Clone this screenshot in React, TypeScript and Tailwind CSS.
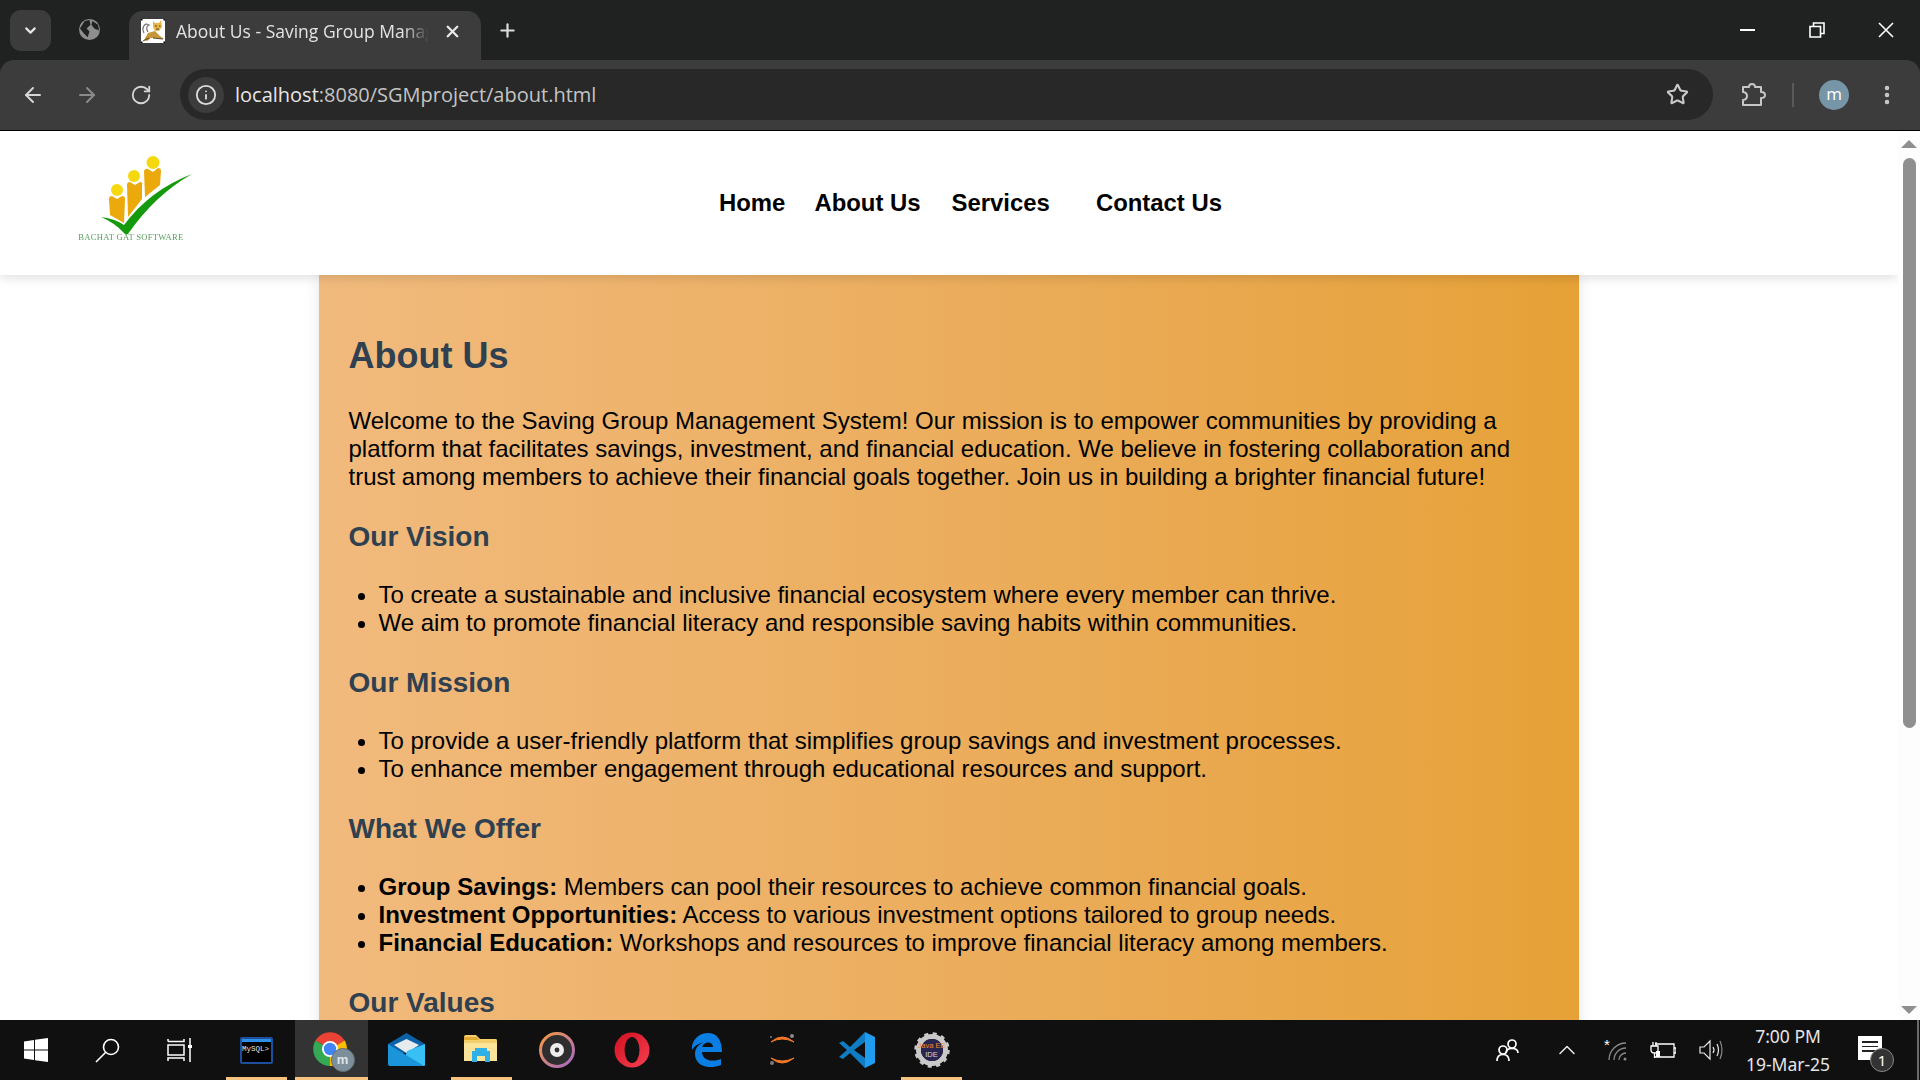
import { ArrowLeft, ArrowRight, ChevronDown, ChevronUp, Info, MoreVertical, Plus, RotateCw, Star, X } from 'lucide-react';

function TomcatIcon() {
  return (
    <svg width="24" height="24" viewBox="0 0 24 24" className="shrink-0">
      <rect width="24" height="24" fill="#fff" />
      <path d="M7 13 Q4 8 8 6 L5 5 Q0 8 3 14" fill="none" stroke="#777" strokeWidth="1.2" />
      <path d="M3 21 L7 14 L14 12 L19 17 L23 20 L16 19 L10 19 L6 22 Z" fill="#c8963a" />
      <path d="M12 2 L14 4 L18 4 L20 1 L21 8 L18 12 L14 12 L12 8 Z" fill="#e8b648" />
      <path d="M14 7 h2 M18 7 h1.5 M15 10 h3" stroke="#4a3412" strokeWidth="0.9" />
      <path d="M2 22 L8 19 M12 19 L22 20" stroke="#4a3412" strokeWidth="0.9" />
      <rect width="1.5" height="1.5" fill="#000" /><rect x="22.5" width="1.5" height="1.5" fill="#000" />
      <rect y="22.5" width="1.5" height="1.5" fill="#000" /><rect x="22.5" y="22.5" width="1.5" height="1.5" fill="#000" />
    </svg>
  );
}

function Logo() {
  return (
    <svg width="180" height="130" viewBox="0 0 180 130" className="blur-[0.3px]">
      <circle cx="67" cy="55" r="6" fill="#f6d80f" />
      <circle cx="84" cy="41" r="6" fill="#f6d80f" />
      <circle cx="103" cy="27.5" r="6.5" fill="#f6d80f" />
      <path d="M59 64 Q59 61 62 61 L67 64 L72 61 Q75 61 75 64 L74 88 L60 80 Z" fill="#eba90c" />
      <path d="M77 50 Q77 47 80 47 L85 50 L90 47 Q93 47 92 50 L92 64 L78 82 Z" fill="#eba90c" />
      <path d="M94 36 Q95 33 98 34 L103 37 L108 33 Q111 33 111 36 L110 50 L95 62 Z" fill="#eba90c" />
      <path d="M51 82 Q66 84 74 90 Q100 55 142 39 Q105 60 78 99 Q75 100 74 98 Q65 88 51 82 Z" fill="#159a0d" />
      <text x="28.3" y="105" textLength="105" fontSize="8.6" fill="#5a9e60" fontFamily="Liberation Serif, serif">BACHAT GAT SOFTWARE</text>
    </svg>
  );
}

function PuzzleIcon() {
  return (
    <svg width="26" height="26" viewBox="0 0 26 26" fill="none" stroke="#c7c7c7" strokeWidth="2">
      <path d="M3 5 H9 Q9 2 12 2 Q15 2 15 5 H21 V10 Q25 10 25 13 Q25 16 21 16 V23 H3 V18 Q7 17.5 7 14 Q7 10.5 3 10 Z" strokeLinejoin="round" />
    </svg>
  );
}

function MysqlIcon() {
  return (
    <div className="w-[33px] h-[27px] bg-black border-2 border-[#1c4f9c] rounded-[2px] flex flex-col">
      <div className="h-[3px] bg-[#2f8fe8]" />
      <span className="text-[7.5px] leading-[14px] text-[#e8e8e8] font-['Liberation_Mono',monospace] whitespace-nowrap">MySQL&gt;</span>
    </div>
  );
}

function ChromeIcon() {
  return (
    <div className="relative w-[40px] h-[38px]">
      <svg width="36" height="36" viewBox="0 0 36 36">
        <path d="M18 18 L3.4 9.6 A17 17 0 0 1 32.7 9.6 Z" fill="#ea4335" />
        <path d="M18 18 L32.7 9.6 A17 17 0 0 1 18 35 Z" fill="#fbbc04" />
        <path d="M18 18 L18 35 A17 17 0 0 1 3.4 9.6 Z" fill="#34a853" />
        <circle cx="18" cy="18" r="8" fill="#fff" />
        <circle cx="18" cy="18" r="6.2" fill="#4285f4" />
      </svg>
      <div className="absolute right-[-3px] bottom-[-3px] w-[24px] h-[24px] rounded-full bg-[#7d8f9b] border border-[#5f6c74] flex items-center justify-center text-[#dfe5e8] text-[13px] font-bold font-['Liberation_Sans',sans-serif]">m</div>
    </div>
  );
}

function MailIcon() {
  return (
    <svg width="38" height="34" viewBox="0 0 38 34">
      <path d="M0 11 L18.5 0 L37 11 V20 H0 Z" fill="#0b62a8" />
      <path d="M6 12 L18.5 6 L31 12 L18.5 20 Z" fill="#e6ebee" />
      <path d="M37 11 V32 Q37 33 36 33 H14 L19 18 Z" fill="#38c0f5" />
      <path d="M0 11 L36 33 H2 Q0 33 0 31 Z" fill="#1b95da" />
    </svg>
  );
}

function ExplorerIcon() {
  return (
    <svg width="36" height="30" viewBox="0 0 36 30">
      <path d="M0 2 Q0 0 2 0 H12 L16 4 H32 Q33 4 33 6 V26 H0 Z" fill="#f5cf6b" />
      <path d="M0 2 H13 L15 5 H0 Z" fill="#e2ab36" />
      <path d="M0 8 H33 V26 H0 Z" fill="#fbe39a" />
      <path d="M8 16 H26 V27 H21 V21 H13 V27 H8 Z" fill="#2fb1e8" />
      <path d="M11 13 H23 V16 H11 Z" fill="#2fb1e8" />
    </svg>
  );
}

function GrooveIcon() {
  return (
    <svg width="38" height="38" viewBox="0 0 38 38">
      <defs>
        <linearGradient id="groove" x1="0" y1="0" x2="1" y2="1">
          <stop offset="0" stopColor="#f59a43" />
          <stop offset="1" stopColor="#a368c8" />
        </linearGradient>
      </defs>
      <circle cx="19" cy="19" r="16.5" fill="#2e2e2e" stroke="url(#groove)" strokeWidth="3" />
      <circle cx="19" cy="19" r="7" fill="#eee" />
      <circle cx="19" cy="19" r="2.4" fill="#333" />
    </svg>
  );
}

function OperaIcon() {
  return (
    <svg width="36" height="36" viewBox="0 0 36 36">
      <defs>
        <linearGradient id="opera" x1="0" y1="0" x2="1" y2="1">
          <stop offset="0" stopColor="#d01020" />
          <stop offset="1" stopColor="#f84050" />
        </linearGradient>
      </defs>
      <ellipse cx="18" cy="18" rx="17.5" ry="17.5" fill="url(#opera)" />
      <ellipse cx="18" cy="18" rx="7.5" ry="13" fill="#111" />
    </svg>
  );
}

function EdgeIcon() {
  return (
    <svg width="32" height="34" viewBox="0 0 32 34">
      <path d="M1 13 C3 4 10 0 17 0 C26 0 31 7 31 19 H11 C11 26 19 30 30 26 V32 C18 37 4 33 4 21 C4 15 8 11 13 9 C9 10 4 12 1 17 Z M11 14 H22 C22 8 13 8 11 14 Z" fill="#0a7ee2" fillRule="evenodd" />
    </svg>
  );
}

function JupyterIcon() {
  return (
    <svg width="30" height="34" viewBox="0 0 30 34">
      <path d="M4 9 Q15 -1 27 9 Q15 3 4 9 Z" fill="#f37726" stroke="#f37726" />
      <path d="M4 25 Q15 35 27 25 Q15 31 4 25 Z" fill="#f37726" stroke="#f37726" />
      <circle cx="25" cy="3" r="2" fill="#8a8a8a" />
      <circle cx="5" cy="30" r="2" fill="#7a7a7a" />
      <circle cx="4" cy="4" r="1" fill="#7a7a7a" />
    </svg>
  );
}

function VscodeIcon() {
  return (
    <svg width="36" height="36" viewBox="0 0 36 36">
      <path d="M26 0 L36 5 V31 L26 36 Z" fill="#1f9cf0" />
      <path d="M26 0 L11 15 L4 9 L0 11 L8 18 L0 25 L4 27 L11 21 L26 36 V26 L15 18 L26 10 Z" fill="#0e7dc4" />
    </svg>
  );
}

function EclipseIcon() {
  return (
    <div className="relative w-[36px] h-[36px]">
      <svg width="36" height="36" viewBox="0 0 36 36">
        <circle cx="18" cy="18" r="13.5" fill="none" stroke="#c9c9c9" strokeWidth="5" />
        <circle cx="18" cy="18" r="16" fill="none" stroke="#c9c9c9" strokeWidth="3.5" strokeDasharray="4 4.4" />
        <circle cx="18" cy="18" r="11" fill="#2a2550" />
      </svg>
      <div className="absolute inset-0 flex flex-col items-center justify-center text-[7.5px] leading-[9px] text-[#f08a1c] font-['Liberation_Sans',sans-serif] whitespace-nowrap">
        <span>Java EE</span>
        <span className="text-[#d8d8d8]">IDE</span>
      </div>
    </div>
  );
}

function TaskSlot({ children, active, open }: { children: React.ReactNode; active?: boolean; open?: boolean }) {
  return (
    <div className={`relative h-full flex items-center justify-center ${active ? 'bg-[#333333] w-[73px] mx-[1px]' : 'w-[75px]'}`}>
      {children}
      {open && <div className={`absolute bottom-0 h-[3px] bg-[#f6c27f] ${active ? 'left-0 right-0' : 'left-[7px] right-[7px]'}`} />}
    </div>
  );
}

function Browser() {
  return (
    <div className="shrink-0 bg-[#202221] font-['Open_Sans',sans-serif]">
      <div className="h-[60px] flex items-end pl-[10px] relative">
        <div className="self-start mt-[10px] w-[41px] h-[41px] rounded-[11px] bg-[#3c3c3c] flex items-center justify-center">
          <ChevronDown size={17} strokeWidth={3} color="#e5e5e5" />
        </div>
        <div className="self-start mt-[19px] ml-[28px] w-[21px] h-[21px] rounded-full bg-[#8e8e8e] overflow-hidden">
          <svg width="21" height="21" viewBox="0 0 22 22">
            <path d="M6 2 L11 1 L12 6 L8 10 L11 13 L9 19 L5 15 L1 10 Z M14 2 L20 6 L21 12 L16 10 L13 6 Z" fill="#202221" />
          </svg>
        </div>
        <div className="ml-[29px] w-[352px] h-[49px] rounded-t-[14px] bg-[#3c3c3c] flex items-center pl-[12px] pb-[9px]">
          <TomcatIcon />
          <span className="ml-[11px] w-[253px] shrink-0 overflow-hidden whitespace-nowrap text-[17.5px] text-[#e3e3e3] [mask-image:linear-gradient(to_right,black_90%,transparent)]">About Us - Saving Group Management</span>
          <X size={19} strokeWidth={3} color="#e8e8e8" className="ml-[14px] shrink-0" />
        </div>
        <Plus size={21} strokeWidth={2.5} color="#dcdcdc" className="self-start mt-[20px] ml-[16px]" />
        <div className="absolute right-0 top-0 h-[60px] flex items-center pb-[1px]">
          <div className="w-[69px] flex justify-center"><div className="w-[15px] h-[2px] bg-white" /></div>
          <div className="w-[69px] flex justify-center">
            <svg width="16" height="16" viewBox="0 0 16 16" fill="none" stroke="#fff" strokeWidth="1.6"><path d="M1 4.5 H11.5 V15 H1 Z M4.5 4 V1 H15 V11.5 H12" /></svg>
          </div>
          <div className="w-[69px] flex justify-center">
            <svg width="16" height="16" viewBox="0 0 16 16" stroke="#fff" strokeWidth="1.6"><path d="M1 1 L15 15 M15 1 L1 15" /></svg>
          </div>
        </div>
      </div>
      <div className="h-[70px] rounded-t-[14px] bg-[#3c3c3c] flex items-center pb-[1px]">
        <ArrowLeft size={24} color="#d5d5d5" className="ml-[21px]" />
        <ArrowRight size={24} color="#8a8a8a" className="ml-[30px]" />
        <RotateCw size={22} color="#d5d5d5" className="ml-[31px]" />
        <div className="ml-[28px] w-[1533px] h-[51px] rounded-full bg-[#282828] flex items-center pl-[8px]">
          <div className="w-[36px] h-[36px] rounded-full bg-[#3c3c3c] flex items-center justify-center">
            <Info size={22} color="#dcdcdc" />
          </div>
          <span className="ml-[11px] text-[20px] text-[#e6e6e6]">
            localhost<span className="text-[#c4c4c4]">:8080/SGMproject/about.html</span>
          </span>
          <Star size={23} color="#c9c9c9" strokeWidth={2.2} className="ml-auto mr-[24px]" />
        </div>
        <div className="ml-[27px]"><PuzzleIcon /></div>
        <div className="ml-[26px] w-[2px] h-[24px] bg-[#5a5a5a]" />
        <div className="ml-[25px] w-[30px] h-[30px] rounded-full bg-[#7696a8] flex items-center justify-center text-white text-[17px] pb-[2px]">m</div>
        <MoreVertical size={24} strokeWidth={2.5} color="#c9c9c9" className="ml-[26px]" />
      </div>
    </div>
  );
}

function Taskbar() {
  return (
    <div className="shrink-0 h-[60px] bg-[#101010] flex items-stretch relative">
      <div className="w-[72px] flex items-center justify-center">
        <svg width="24" height="24" viewBox="0 0 24 24" fill="#fff">
          <path d="M0 3.5 L10 2 V11.5 H0 Z M11 1.8 L24 0 V11.5 H11 Z M0 12.5 H10 V22 L0 20.5 Z M11 12.5 H24 V24 L11 22.2 Z" />
        </svg>
      </div>
      <div className="w-[72px] flex items-center justify-center">
        <svg width="26" height="26" viewBox="0 0 26 26" fill="none" stroke="#fff" strokeWidth="1.6">
          <circle cx="16" cy="10" r="7.5" /><path d="M10.5 15.5 L1 25" />
        </svg>
      </div>
      <div className="w-[72px] flex items-center justify-center">
        <svg width="26" height="24" viewBox="0 0 26 24" fill="none" stroke="#fff" strokeWidth="1.5">
          <path d="M1 3.5 V1 M1 3.5 H17 V1 M1 7 H17 V17 H1 Z M1 23 V20 H17 V23 M23 0 V24" /><rect x="21" y="7" width="4" height="3" fill="#fff" stroke="none" />
        </svg>
      </div>
      <div className="w-[3px]" />
      <TaskSlot open><MysqlIcon /></TaskSlot>
      <TaskSlot active open><ChromeIcon /></TaskSlot>
      <TaskSlot><MailIcon /></TaskSlot>
      <TaskSlot open><ExplorerIcon /></TaskSlot>
      <TaskSlot><GrooveIcon /></TaskSlot>
      <TaskSlot><OperaIcon /></TaskSlot>
      <TaskSlot><EdgeIcon /></TaskSlot>
      <TaskSlot><JupyterIcon /></TaskSlot>
      <TaskSlot><VscodeIcon /></TaskSlot>
      <TaskSlot open><EclipseIcon /></TaskSlot>
      <div className="ml-auto flex items-center text-white font-['Noto_Sans',sans-serif]">
        <svg width="24" height="24" viewBox="0 0 24 24" fill="none" stroke="#fff" strokeWidth="1.7">
          <circle cx="16" cy="6" r="4" /><path d="M10 15 Q10 10.5 16 10.5 Q22 10.5 22 15" />
          <circle cx="7" cy="12" r="4" /><path d="M1 23 Q1 16.5 7 16.5 Q13 16.5 13 23" />
        </svg>
        <ChevronUp size={28} strokeWidth={1.3} color="#e8e8e8" className="ml-[33px]" />
        <svg width="26" height="24" viewBox="0 0 26 24" fill="none" stroke="#8a8a8a" strokeWidth="1.3" className="ml-[23px]">
          <path d="M5 22 A17 17 0 0 1 22 5 M10 22 A12 12 0 0 1 22 10 M15 22 A7 7 0 0 1 22 15" /><circle cx="21" cy="21" r="1.5" fill="#8a8a8a" stroke="none" />
          <text x="0" y="12" fill="#fff" stroke="none" fontSize="15" fontFamily="Liberation Sans">*</text>
        </svg>
        <svg width="26" height="18" viewBox="0 0 26 18" fill="none" stroke="#fff" strokeWidth="1.3" className="ml-[20px]">
          <path d="M5 3 H24 V16 H5 M24 7 H26 V12 H24" /><path d="M1 5 H8 V9 Q8 12 4.5 12 Q1 12 1 9 Z M3 1 V5 M6 1 V5 M4.5 12 V17" /><rect x="6" y="10" width="4" height="6" fill="#fff" stroke="none" />
        </svg>
        <svg width="24" height="22" viewBox="0 0 24 22" fill="none" stroke="#e8e8e8" strokeWidth="1.2" className="ml-[23px]">
          <path d="M1 8 H5 L11 2 V20 L5 14 H1 Z" /><path d="M14 8 Q16 11 14 14 M18 5 Q21 11 18 17" /><path d="M21 2 Q25 11 21 20" stroke="#888" />
        </svg>
        <div className="ml-[15px] w-[100px] flex flex-col items-center text-[17.5px] leading-[28px] text-[#e6e6e6] whitespace-nowrap pb-[1px]">
          <span>7:00 PM</span>
          <span>19-Mar-25</span>
        </div>
        <div className="relative ml-[20px] mr-[38px] w-[24px] h-[24px] bg-white mb-[4px]">
          <div className="mx-[4px] mt-[5px] h-[1.5px] bg-[#222]" />
          <div className="mx-[4px] mt-[3px] h-[1.5px] bg-[#222]" />
          <div className="mx-[4px] mt-[3px] h-[1.5px] bg-[#222]" />
          <div className="absolute right-[-12px] bottom-[-12px] w-[24px] h-[24px] rounded-full bg-[#333] border border-[#888] flex items-center justify-center text-[15px] text-white">1</div>
        </div>
      </div>
      <div className="absolute right-[1px] top-0 bottom-0 w-[2px] bg-[#6a6a6a]" />
    </div>
  );
}

function Scrollbar() {
  return (
    <div className="w-[22px] shrink-0 bg-[#fdfdfd] flex flex-col items-center relative">
      <div className="mt-[9px] w-0 h-0 border-x-[8px] border-x-transparent border-b-[8px] border-b-[#8f8f8f]" />
      <div className="mt-[10px] w-[13px] h-[570px] rounded-full bg-[#8f8f8f]" />
      <div className="mt-auto mb-[6px] w-0 h-0 border-x-[8px] border-x-transparent border-t-[8px] border-t-[#8f8f8f]" />
    </div>
  );
}

function Section({ title, children }: { title: string; children?: React.ReactNode }) {
  return (
    <section>
      <h3 className="mt-[30px] mb-[28px] text-[28px] leading-[32px] font-bold text-[#2f4050]">{title}</h3>
      <ul className="list-disc pl-[30px] text-[24px] leading-[28px] text-black">{children}</ul>
    </section>
  );
}

export default function App() {
  return (
    <div className="h-screen flex flex-col overflow-hidden bg-white font-['Liberation_Sans',Arial,sans-serif]">
      <Browser />
      <div className="h-[1px] bg-black shrink-0" />
      <div className="flex-1 min-h-0 flex">
        <div className="flex-1 min-w-0 overflow-hidden flex flex-col">
          <header className="relative z-10 shrink-0 h-[144px] bg-white shadow-[0_3px_10px_rgba(0,0,0,0.12)] flex items-center">
            <div className="ml-[50px] mb-[6px]">
              <Logo />
            </div>
            <nav className="ml-[489px] flex text-[23.9px] font-bold text-black">
              <a className="mr-[29px]">Home</a>
              <a className="mr-[31px]">About Us</a>
              <a className="mr-[46px]">Services</a>
              <a>Contact Us</a>
            </nav>
          </header>
          <main className="shrink-0 ml-[319px] w-[1260px] px-[29.5px] pt-[60px] pb-[40px] bg-gradient-to-r from-[#f1ba7d] to-[#e6a136] shadow-[0_0_14px_rgba(0,0,0,0.1)]">
            <h1 className="text-[36px] leading-[41px] font-bold text-[#2f4050]">About Us</h1>
            <p className="mt-[31px] text-[24px] leading-[28px] text-black">
              Welcome to the Saving Group Management System! Our mission is to empower communities by providing a platform that facilitates savings, investment, and financial education. We believe in fostering collaboration and trust among members to achieve their financial goals together. Join us in building a brighter financial future!
            </p>
            <Section title="Our Vision">
              <li>To create a sustainable and inclusive financial ecosystem where every member can thrive.</li>
              <li>We aim to promote financial literacy and responsible saving habits within communities.</li>
            </Section>
            <Section title="Our Mission">
              <li>To provide a user-friendly platform that simplifies group savings and investment processes.</li>
              <li>To enhance member engagement through educational resources and support.</li>
            </Section>
            <Section title="What We Offer">
              <li><strong>Group Savings:</strong> Members can pool their resources to achieve common financial goals.</li>
              <li><strong>Investment Opportunities:</strong> Access to various investment options tailored to group needs.</li>
              <li><strong>Financial Education:</strong> Workshops and resources to improve financial literacy among members.</li>
            </Section>
            <Section title="Our Values" />
          </main>
        </div>
        <Scrollbar />
      </div>
      <Taskbar />
    </div>
  );
}
